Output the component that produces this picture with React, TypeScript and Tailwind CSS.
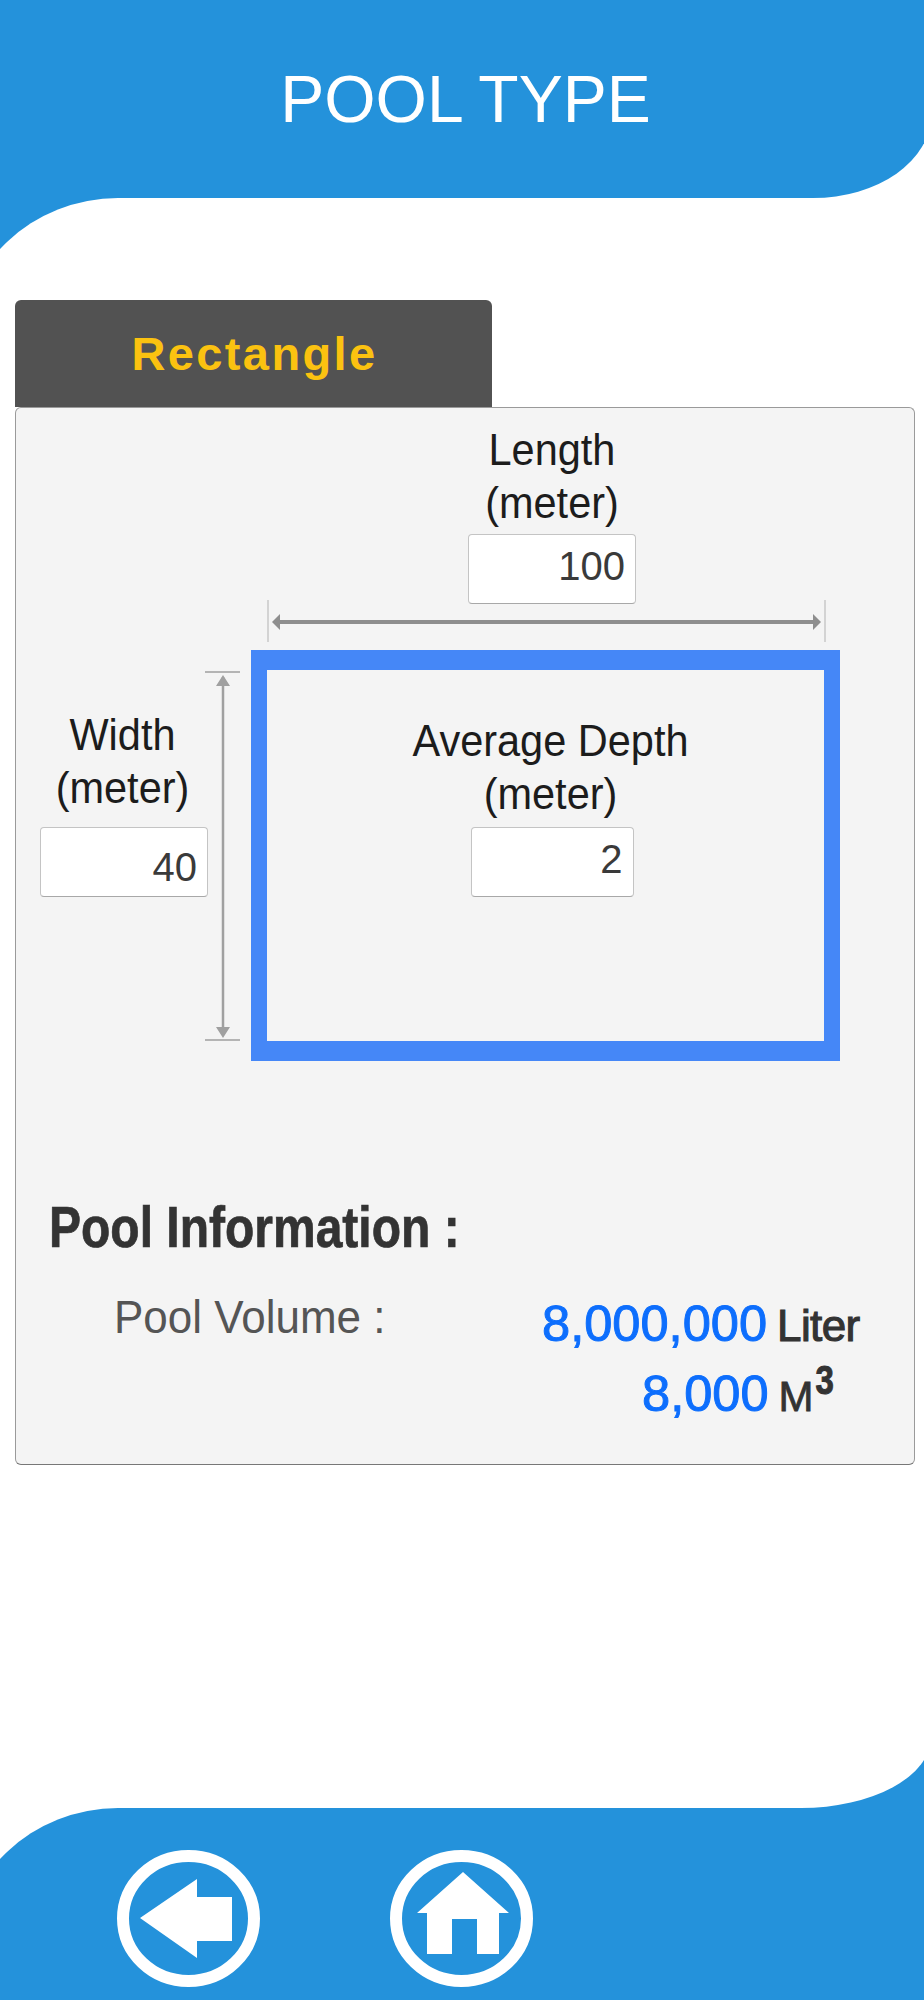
import React from "react";

const BLUE = "bg-[#2492db]";

function Field({ value, w, pad }: { value: string; w: string; pad: string }) {
  return (
    <div className={`${w} ${pad} h-[70px] bg-white border border-[#c4c4c4] border-b-[#a8a8a8] rounded-[4px] pr-[10px] text-right text-[40px] leading-[46px] text-[#3a3a3a]`}>
      {value}
    </div>
  );
}

function Label({ lines }: { lines: string[] }) {
  return (
    <div className="text-center text-[41.5px] leading-[53px] text-[#1c1c1c] whitespace-nowrap">
      {lines.map((l) => (
        <div key={l} className="scale-y-[1.07]">{l}</div>
      ))}
    </div>
  );
}

export default function App() {
  return (
    <div className="w-[924px] h-[2000px] bg-white flex flex-col font-['Liberation_Sans',Arial,sans-serif] overflow-hidden">
      {/* Header */}
      <header className={`${BLUE} w-[931px] h-[198px] shrink-0 rounded-br-[118px_83px] flex justify-center pt-[64px]`}>
        <h1 className="text-[66px] leading-[70px] text-white font-normal">POOL TYPE</h1>
      </header>
      <div className={`${BLUE} w-[118px] h-[51px] shrink-0 overflow-hidden`}>
        <div className="-ml-[39px] w-[157px] h-[150px] bg-white rounded-tl-[157px_150px]" />
      </div>

      {/* Tab */}
      <div className="mt-[51px] ml-[15px] w-[477px] h-[107px] shrink-0 bg-[#525252] rounded-t-[6px] flex items-center justify-center">
        <span className="text-[47px] font-bold tracking-[2.4px] text-[#fbc210] ml-[2px] mt-[1px]">Rectangle</span>
      </div>

      {/* Panel */}
      <section className="ml-[15px] w-[900px] h-[1058px] shrink-0 bg-[#f4f4f4] border border-[#9a9a9a] border-b-[#777] rounded-[6px] flex flex-col">
        <div className="ml-[452px] w-[168px] mt-[15px] flex flex-col items-center">
          <Label lines={["Length", "(meter)"]} />
          <Field value="100" w="w-[168px]" pad="mt-[5px] pt-[8px]" />
        </div>

        {/* horizontal dimension */}
        <svg className="ml-[251px] -mt-[4px] shrink-0" width="560" height="44" viewBox="0 0 560 44">
          <path d="M1 0V42M558 0V42" stroke="#c8c8c8" strokeWidth="1.5" fill="none" />
          <path d="M7 22H552" stroke="#8e8e8e" strokeWidth="4" fill="none" />
          <path d="M5 22L13 14V30ZM554 22L546 14V30Z" fill="#8e8e8e" />
        </svg>

        <div className="mt-[6px] flex items-start">
          {/* Width column */}
          <div className="ml-[24px] w-[168px] mt-[58px] shrink-0 flex flex-col">
            <div className="-ml-[3px]">
              <Label lines={["Width", "(meter)"]} />
            </div>
            <Field value="40" w="w-[168px]" pad="mt-[13px] pt-[16px]" />
          </div>

          {/* vertical dimension */}
          <svg className="-ml-[3px] mt-[21px] shrink-0" width="46" height="372" viewBox="0 0 46 372">
            <path d="M0 1H35M0 369H35" stroke="#b4b4b4" strokeWidth="2" fill="none" />
            <path d="M18 6V364" stroke="#a0a0a0" strokeWidth="2.5" fill="none" />
            <path d="M18 4L11 15H25ZM18 367L11 356H25Z" fill="#a0a0a0" />
          </svg>

          {/* Pool outline */}
          <div className="w-[589px] h-[411px] shrink-0 border-x-[16px] border-y-[20px] border-[#4587f7] pt-[44px] flex flex-col items-center">
            <div className="ml-[10px]">
              <Label lines={["Average Depth", "(meter)"]} />
            </div>
            <div className="ml-[13px]">
              <Field value="2" w="w-[163px]" pad="mt-[7px] pt-[8px]" />
            </div>
          </div>
        </div>

        {/* Pool information */}
        <h2 className="ml-[33px] mt-[137px] text-[48px] leading-[60px] font-bold text-[#333] scale-y-[1.2] origin-left [-webkit-text-stroke:0.6px_#333]">
          Pool Information :
        </h2>
        <div className="mt-[34px] flex items-start">
          <div className="ml-[98px] w-[428px] shrink-0 text-[44px] leading-[50px] text-[#555] scale-y-[1.05]">Pool Volume :</div>
          <div className="flex flex-col mt-[3px]">
            <div className="flex items-baseline h-[70px]">
              <span className="text-[50.6px] leading-[58px] text-[#0d6efd] [-webkit-text-stroke:1px_#0d6efd]">8,000,000</span>
              <span className="ml-[10px] text-[44px] leading-[58px] tracking-[-0.6px] text-[#333] [-webkit-text-stroke:1.1px_#333]">Liter</span>
            </div>
            <div className="flex items-baseline">
              <span className="ml-[100px] text-[50.6px] leading-[58px] text-[#0d6efd] [-webkit-text-stroke:1px_#0d6efd]">8,000</span>
              <span className="ml-[10px] text-[42px] leading-[58px] text-[#333] [-webkit-text-stroke:0.8px_#333]">
                M<span className="inline-block text-[33px] font-bold leading-none -translate-y-[20px] scale-y-[1.25] ml-[2px]">3</span>
              </span>
            </div>
          </div>
        </div>
      </section>

      <div className="flex-1" />

      {/* Footer */}
      <div className={`${BLUE} ml-auto w-[123px] h-[48px] shrink-0 flex items-end overflow-hidden`}>
        <div className="w-[130px] h-[71px] shrink-0 bg-white rounded-br-[130px_71px]" />
      </div>
      <footer className={`${BLUE} -ml-[39px] w-[963px] h-[192px] shrink-0 rounded-tl-[157px_150px] flex items-start pt-[42px] pl-[156px] gap-[130px]`}>
        <svg width="143" height="137" viewBox="0 0 143 137">
          <ellipse cx="71.5" cy="68.5" rx="65.5" ry="62.5" fill="none" stroke="#fff" strokeWidth="12" />
          <path d="M23 68L80 29V47H115V91H80V108Z" fill="#fff" />
        </svg>
        <svg width="143" height="137" viewBox="0 0 143 137">
          <ellipse cx="71.5" cy="68.5" rx="65.5" ry="62.5" fill="none" stroke="#fff" strokeWidth="12" />
          <path d="M73 22L119 63H109V104H87V69H62V104H37V63H27Z" fill="#fff" />
        </svg>
      </footer>
    </div>
  );
}
